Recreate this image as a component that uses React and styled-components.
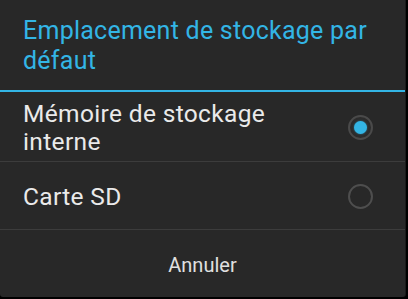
import React from "react";
import styled, { createGlobalStyle } from "styled-components";

const Global = createGlobalStyle`
  html, body { margin: 0; padding: 0; background: #000; }
  body { width: 408px; height: 299px; overflow: hidden; font-family: Roboto, "Noto Sans", sans-serif; }
`;

const Dialog = styled.div`
  width: 405px;
  height: 297px;
  background: #282828;
  border-radius: 0 0 3px 3px;
  display: flex;
  flex-direction: column;
  box-shadow: 1px 0 0 #1a1a1a;
`;

const Title = styled.div`
  height: 92px;
  box-sizing: border-box;
  padding: 16px 6px 0 23px;
  color: #33b5e5;
  font-size: 25px;
  line-height: 30px;
  letter-spacing: 0.25px;
  border-bottom: 2px solid #33b5e5;
`;

const Option = styled.div`
  display: flex;
  align-items: center;
  justify-content: space-between;
  height: ${(p) => p.$h}px;
  box-sizing: border-box;
  padding: 2px 32px 0 23px;
  border-bottom: 1px solid #3c3c3c;
`;

const Label = styled.div`
  color: #eaeaea;
  font-size: 24.5px;
  line-height: 28px;
  letter-spacing: 0.35px;
  max-width: 270px;
`;

const Radio = styled.div`
  width: 21px;
  height: 21px;
  border-radius: 50%;
  border: 2px solid ${(p) => (p.$checked ? "#4a4a4a" : "#4e4e4e")};
  background: ${(p) => (p.$checked ? "#2c2c2c" : "transparent")};
  display: flex;
  align-items: center;
  justify-content: center;
  flex-shrink: 0;
`;

const Dot = styled.div`
  width: 13px;
  height: 13px;
  border-radius: 50%;
  background: #33b5e5;
  box-shadow: 0 0 2px rgba(51, 181, 229, 0.6);
`;

const Button = styled.div`
  flex: 1;
  display: flex;
  align-items: center;
  justify-content: center;
  color: #e0e0e0;
  font-size: 20px;
  padding-top: 2px;
`;

export default function App() {
  return (
    <>
      <Global />
      <Dialog>
        <Title>Emplacement de stockage par défaut</Title>
        <Option $h={70}>
          <Label>Mémoire de stockage interne</Label>
          <Radio $checked>
            <Dot />
          </Radio>
        </Option>
        <Option $h={68}>
          <Label>Carte SD</Label>
          <Radio />
        </Option>
        <Button>Annuler</Button>
      </Dialog>
    </>
  );
}
